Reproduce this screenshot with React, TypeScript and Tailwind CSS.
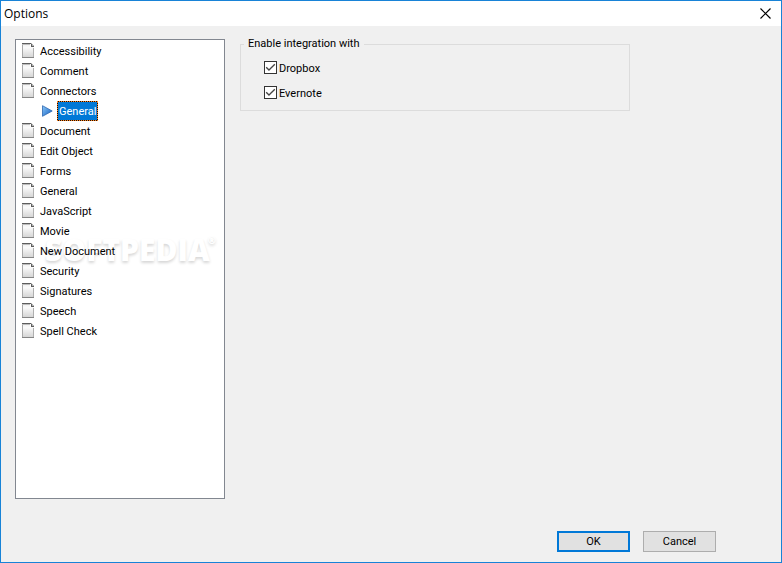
import React, { useState } from 'react';

interface Category {
  id: string;
  label: string;
  children?: Category[];
}

const CATEGORIES: Category[] = [
  { id: 'accessibility', label: 'Accessibility' },
  { id: 'comment', label: 'Comment' },
  {
    id: 'connectors',
    label: 'Connectors',
    children: [{ id: 'connectors-general', label: 'General' }],
  },
  { id: 'document', label: 'Document' },
  { id: 'edit-object', label: 'Edit Object' },
  { id: 'forms', label: 'Forms' },
  { id: 'general', label: 'General' },
  { id: 'javascript', label: 'JavaScript' },
  { id: 'movie', label: 'Movie' },
  { id: 'new-document', label: 'New Document' },
  { id: 'security', label: 'Security' },
  { id: 'signatures', label: 'Signatures' },
  { id: 'speech', label: 'Speech' },
  { id: 'spell-check', label: 'Spell Check' },
];

const PageIcon: React.FC = () => (
  <svg width="12" height="16" viewBox="0 0 12 16" className="shrink-0" shapeRendering="crispEdges" aria-hidden="true">
    <defs>
      <linearGradient id="page-fill" x1="0" y1="0" x2="0" y2="1">
        <stop offset="0" stopColor="#ececec" />
        <stop offset="0.3" stopColor="#fafafa" />
        <stop offset="1" stopColor="#d2d2d2" />
      </linearGradient>
    </defs>
    <path d="M0 0H8V4H12V15H0Z" fill="url(#page-fill)" />
    <path d="M0 0H1V15H0Z" fill="#a8a8a8" />
    <path d="M0 0H9V1H0Z" fill="#5c5c5c" />
    <path d="M0 1H8V2H0Z" fill="#bdbdbd" />
    <path d="M11 5H12V15H11Z" fill="#b0b0b0" />
    <path d="M0 14H12V15H0Z" fill="#858585" />
    <path d="M9 0H10V1H11V2H12V4H9Z" fill="#b4b4b4" />
    <path d="M9 1H10V3H12V4H9Z" fill="#5e5e5e" />
  </svg>
);

const ArrowIcon: React.FC = () => (
  <svg width="11" height="12" viewBox="0 0 11 12" className="shrink-0" aria-hidden="true">
    <defs>
      <linearGradient id="arrow-fill" x1="0" y1="0" x2="1" y2="1">
        <stop offset="0" stopColor="#8cc8f8" />
        <stop offset="1" stopColor="#0f5cc0" />
      </linearGradient>
    </defs>
    <path d="M0.5 0.7L10.2 6L0.5 11.3Z" fill="url(#arrow-fill)" stroke="#2b66b0" strokeWidth="0.8" />
  </svg>
);

const CloseIcon: React.FC = () => (
  <svg width="11" height="11" viewBox="0 0 11 11" stroke="#000000" strokeWidth="1.2" aria-hidden="true">
    <path d="M0.5 0.5L10.5 10.5M10.5 0.5L0.5 10.5" />
  </svg>
);

interface CheckOptionProps {
  label: string;
  checked: boolean;
  onChange: (checked: boolean) => void;
}

const CheckOption: React.FC<CheckOptionProps> = ({ label, checked, onChange }) => (
  <label className="flex h-[25px] items-center gap-0.5">
    <span className="grid">
      <input
        type="checkbox"
        checked={checked}
        onChange={(event) => onChange(event.target.checked)}
        className="peer col-start-1 row-start-1 h-[13px] w-[13px] appearance-none border border-[#333333] bg-white"
      />
      <svg
        width="13"
        height="13"
        viewBox="0 0 13 13"
        className="pointer-events-none invisible col-start-1 row-start-1 peer-checked:visible"
        fill="none"
        stroke="#444444"
        strokeWidth="1.3"
        aria-hidden="true"
      >
        <path d="M2.2 6.2L5 9L10.8 3.2" />
      </svg>
    </span>
    <span className="pt-0.5">{label}</span>
  </label>
);

export default function App() {
  const [selected, setSelected] = useState('connectors-general');
  const [dropbox, setDropbox] = useState(true);
  const [evernote, setEvernote] = useState(true);

  const renderLabel = (item: Category) => (
    <button
      type="button"
      onClick={() => setSelected(item.id)}
      className={
        selected === item.id
          ? 'h-5 border border-[#201000] bg-[#0078d7] px-px pt-0.5 text-white outline-1 -outline-offset-1 outline-dotted outline-[#ff8728]'
          : 'h-5 px-0.5 pt-0.5 text-black'
      }
    >
      {item.label}
    </button>
  );

  return (
    <div className="flex min-h-screen flex-col border border-[#1883d7] bg-[#f0f0f0] font-['Roboto',sans-serif] text-[11px] leading-4 text-black">
      {/* Title bar */}
      <header className="flex h-[25px] items-center justify-between bg-white pr-[10px] pl-[3px]">
        <h1 className="font-['Open_Sans','Noto_Sans',sans-serif] text-xs">Options</h1>
        <button type="button" aria-label="Close">
          <CloseIcon />
        </button>
      </header>

      <main className="flex flex-1 items-stretch gap-[15px] px-[14px] pt-[13px]">
        {/* Category tree */}
        <nav className="relative w-[210px] shrink-0 border border-[#828790] bg-white pt-px pl-1.5">
          {/* Watermark, kept under the labels */}
          <div className="pointer-events-none absolute top-[192px] left-[29px] flex font-['Open_Sans',sans-serif] text-[30px] leading-9 font-extrabold text-white [text-shadow:0_2px_3px_rgba(0,0,0,0.16)]">
            SOFTPEDIA<span className="-ml-0.5 text-[10px] leading-4">®</span>
          </div>
          <ul className="relative">
            {CATEGORIES.map((item) => (
              <li key={item.id}>
                <div className="flex h-5 items-center gap-1">
                  <PageIcon />
                  {renderLabel(item)}
                </div>
                {item.children && (
                  <ul className="pl-5">
                    {item.children.map((child) => (
                      <li key={child.id} className="flex h-5 items-center gap-1">
                        <ArrowIcon />
                        {renderLabel(child)}
                      </li>
                    ))}
                  </ul>
                )}
              </li>
            ))}
          </ul>
        </nav>

        {/* Settings of the selected category */}
        <section className="flex-1 pt-px">
          <fieldset className="h-[71px] w-full max-w-[390px] border border-[#dcdcdc] pt-[7px] pl-[23px]">
            <legend className="-ml-5 px-1 leading-2">Enable integration with</legend>
            <CheckOption label="Dropbox" checked={dropbox} onChange={setDropbox} />
            <CheckOption label="Evernote" checked={evernote} onChange={setEvernote} />
          </fieldset>
        </section>
      </main>

      <footer className="flex justify-end gap-[13px] pt-8 pr-[65px] pb-[10px]">
        <button type="submit" className="flex h-[21px] w-[73px] items-center justify-center border-2 border-[#0078d7] bg-[#e1e1e1]">
          OK
        </button>
        <button type="button" className="flex h-[21px] w-[73px] items-center justify-center border border-[#adadad] bg-[#e1e1e1]">
          Cancel
        </button>
      </footer>
    </div>
  );
}
